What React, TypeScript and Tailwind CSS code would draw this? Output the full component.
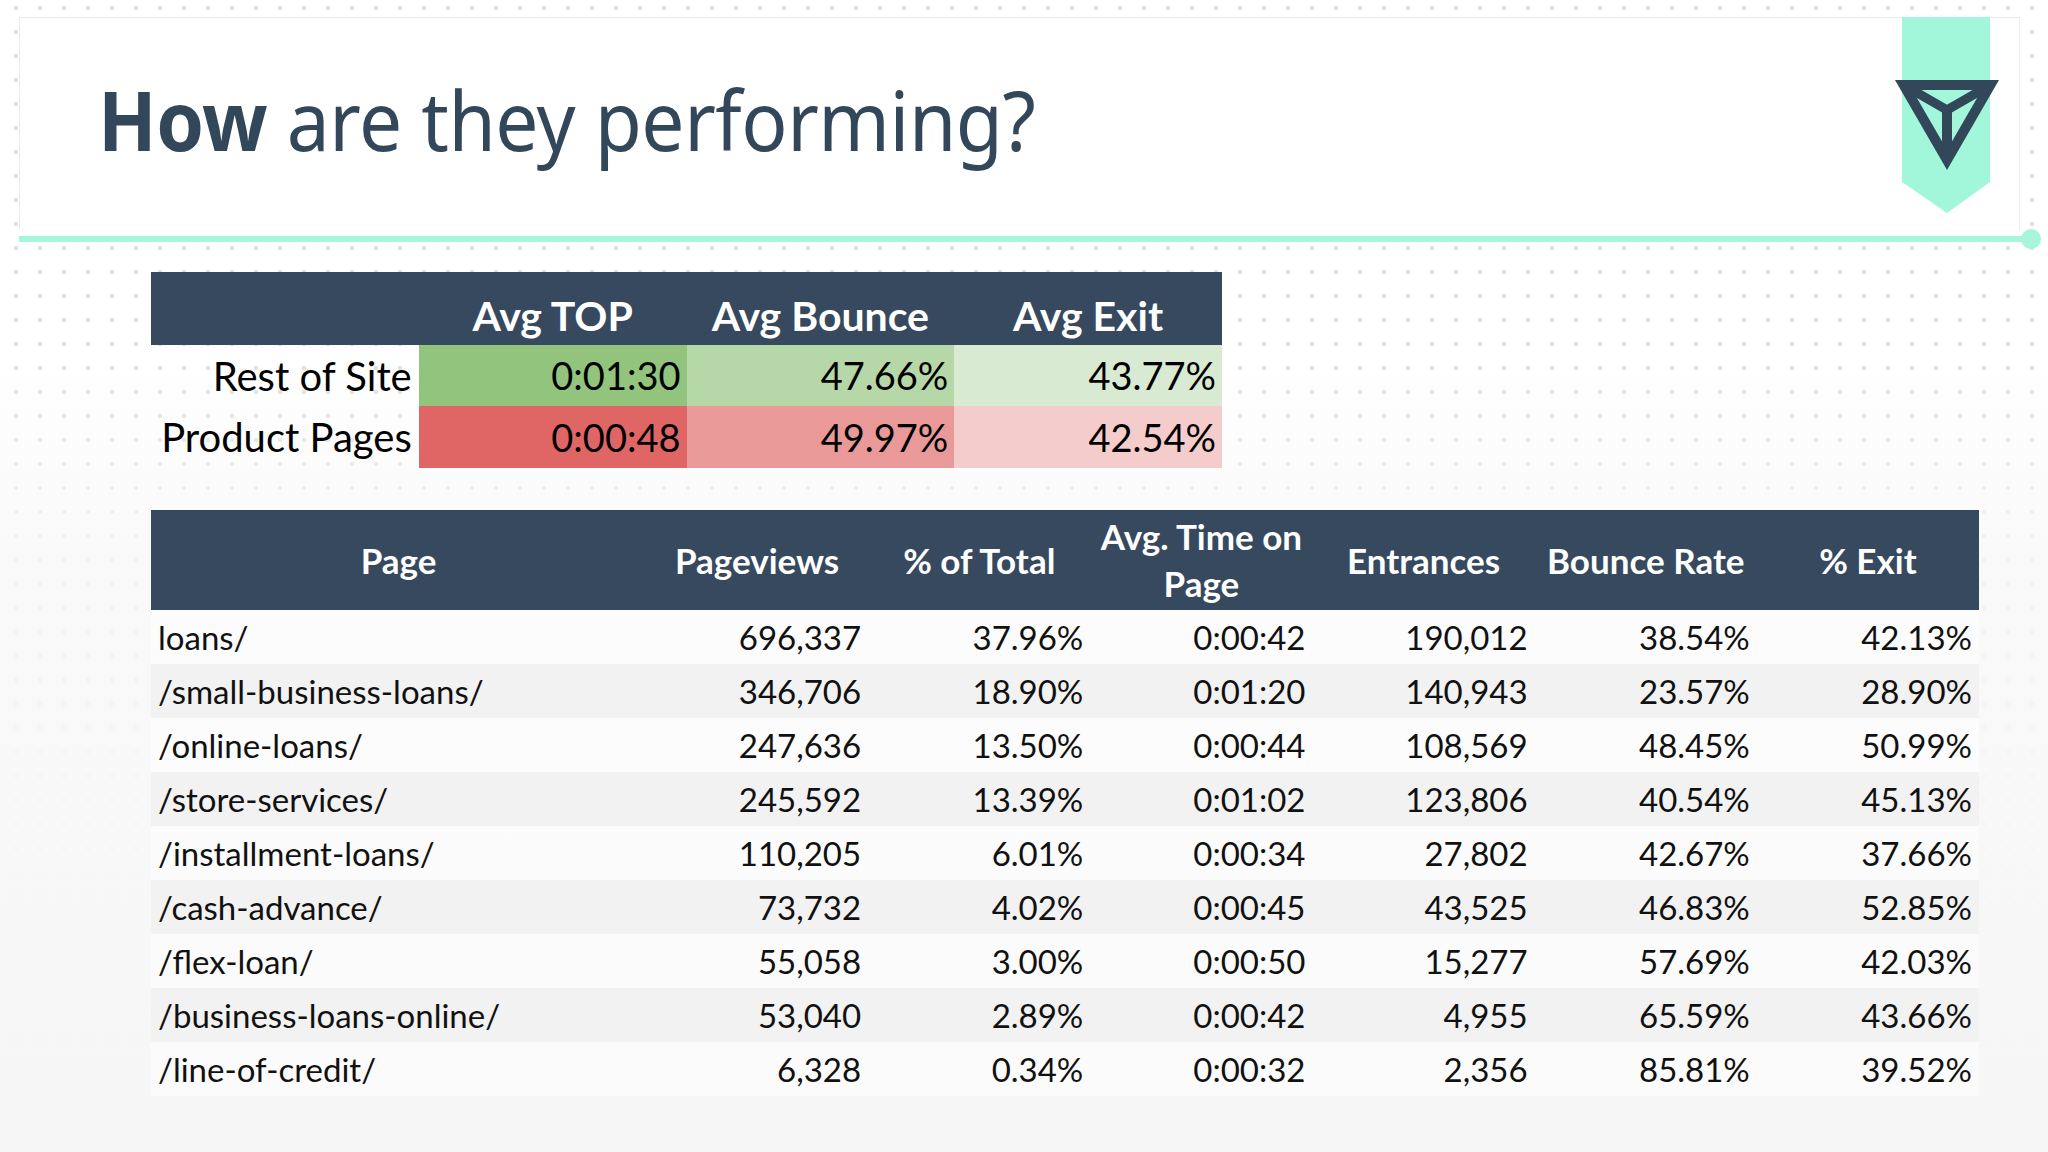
import React from "react";

const rows: string[][] = [
  ["loans/", "696,337", "37.96%", "0:00:42", "190,012", "38.54%", "42.13%"],
  ["/small-business-loans/", "346,706", "18.90%", "0:01:20", "140,943", "23.57%", "28.90%"],
  ["/online-loans/", "247,636", "13.50%", "0:00:44", "108,569", "48.45%", "50.99%"],
  ["/store-services/", "245,592", "13.39%", "0:01:02", "123,806", "40.54%", "45.13%"],
  ["/installment-loans/", "110,205", "6.01%", "0:00:34", "27,802", "42.67%", "37.66%"],
  ["/cash-advance/", "73,732", "4.02%", "0:00:45", "43,525", "46.83%", "52.85%"],
  ["/flex-loan/", "55,058", "3.00%", "0:00:50", "15,277", "57.69%", "42.03%"],
  ["/business-loans-online/", "53,040", "2.89%", "0:00:42", "4,955", "65.59%", "43.66%"],
  ["/line-of-credit/", "6,328", "0.34%", "0:00:32", "2,356", "85.81%", "39.52%"],
];

function Logo() {
  return (
    <svg width="112" height="200" viewBox="0 0 112 200" className="absolute left-[1870px] top-[-1px]">
      <polygon points="12,0 100,0 100,165 57,196 12,165" fill="#a2f7da" />
      <polygon points="5,63 109,63 57,153" fill="#33475b" />
      <polygon points="22.3,73 91.7,73 57,133" fill="#a2f7da" />
      <line x1="57" y1="93" x2="22.3" y2="73" stroke="#33475b" strokeWidth="9" />
      <line x1="57" y1="93" x2="91.7" y2="73" stroke="#33475b" strokeWidth="9" />
      <line x1="57" y1="90" x2="57" y2="135" stroke="#33475b" strokeWidth="10" />
    </svg>
  );
}

export default function App() {
  return (
    <div className="w-[2048px] h-[1152px] overflow-hidden bg-white bg-[linear-gradient(to_bottom,rgba(255,255,255,0)_360px,rgba(248,248,248,0.8)_560px,#f6f6f6_100%),radial-gradient(circle,#e1e1e1_2px,transparent_2.6px)] [background-size:100%_100%,24px_24px] [background-position:0_0,4px_-4px] font-['Lato',sans-serif] flex flex-col">
      {/* Title card */}
      <div className="pt-[17px] pl-[19px] flex flex-col">
        <div className="relative w-[2001px] h-[212px] bg-white border-t border-l border-r border-[#ebebeb] pl-[78px] pt-[60px]">
          <h1 className="text-[82px] leading-none text-[#33475b] font-['Noto_Sans',sans-serif] tracking-[-0.5px] scale-x-[0.935] origin-left whitespace-nowrap">
            <span className="font-bold">How</span> <span className="font-normal">are they performing?</span>
          </h1>
          <Logo />
        </div>
        <div className="flex items-center h-[20px] w-[2022px]">
          <div className="flex-1 h-[6px] bg-[#a7f5da]" />
          <div className="w-[20px] h-[20px] rounded-full bg-[#a7f5da] -ml-[10px]" />
        </div>
      </div>

      {/* Summary table */}
      <div className="ml-[151px] mt-[23px] w-[1071px] grid grid-cols-4 text-black">
        <div className="col-span-4 grid grid-cols-4 h-[73px] bg-[#36495e] text-white font-bold text-[41px] leading-[48px]">
          <div />
          <div className="flex items-end justify-center pb-[5px]">Avg TOP</div>
          <div className="flex items-end justify-center pb-[5px]">Avg Bounce</div>
          <div className="flex items-end justify-center pb-[5px]">Avg Exit</div>
        </div>
        <div className="h-[61px] flex items-center justify-end pr-[7px] text-[40px]">Rest of Site</div>
        <div className="h-[61px] flex items-center justify-end pr-[6px] text-[38px] bg-[#93c47d]">0:01:30</div>
        <div className="h-[61px] flex items-center justify-end pr-[6px] text-[38px] bg-[#b6d7a8]">47.66%</div>
        <div className="h-[61px] flex items-center justify-end pr-[6px] text-[38px] bg-[#d9ead3]">43.77%</div>
        <div className="h-[62px] flex items-center justify-end pr-[7px] text-[40px]">Product Pages</div>
        <div className="h-[62px] flex items-center justify-end pr-[6px] text-[38px] bg-[#e06666]">0:00:48</div>
        <div className="h-[62px] flex items-center justify-end pr-[6px] text-[38px] bg-[#ea9999]">49.97%</div>
        <div className="h-[62px] flex items-center justify-end pr-[6px] text-[38px] bg-[#f4cccc]">42.54%</div>
      </div>

      {/* Main table */}
      <div className="ml-[151px] mt-[42px] w-[1828px] flex flex-col">
        <div className="grid grid-cols-[495px_repeat(6,1fr)] h-[100px] bg-[#36495e] text-white font-bold text-[35px] leading-[47px]">
          <div className="flex items-center justify-center">Page</div>
          <div className="flex items-center justify-center">Pageviews</div>
          <div className="flex items-center justify-center">% of Total</div>
          <div className="flex items-center justify-center text-center whitespace-nowrap">
            Avg. Time on
            <br />
            Page
          </div>
          <div className="flex items-center justify-center">Entrances</div>
          <div className="flex items-center justify-center">Bounce Rate</div>
          <div className="flex items-center justify-center">% Exit</div>
        </div>
        {rows.map((r, i) => (
          <div
            key={i}
            className={
              "grid grid-cols-[495px_repeat(6,1fr)] h-[54px] text-[33px] text-[#111] " +
              (i % 2 === 0 ? "bg-white/50" : "bg-[#f2f2f2]")
            }
          >
            {r.map((c, j) => (
              <div
                key={j}
                className={
                  j === 0
                    ? "flex items-center justify-start pl-[7px] pt-[2px]"
                    : "flex items-center justify-end pr-[7px] pt-[2px]"
                }
              >
                {c}
              </div>
            ))}
          </div>
        ))}
      </div>
    </div>
  );
}
